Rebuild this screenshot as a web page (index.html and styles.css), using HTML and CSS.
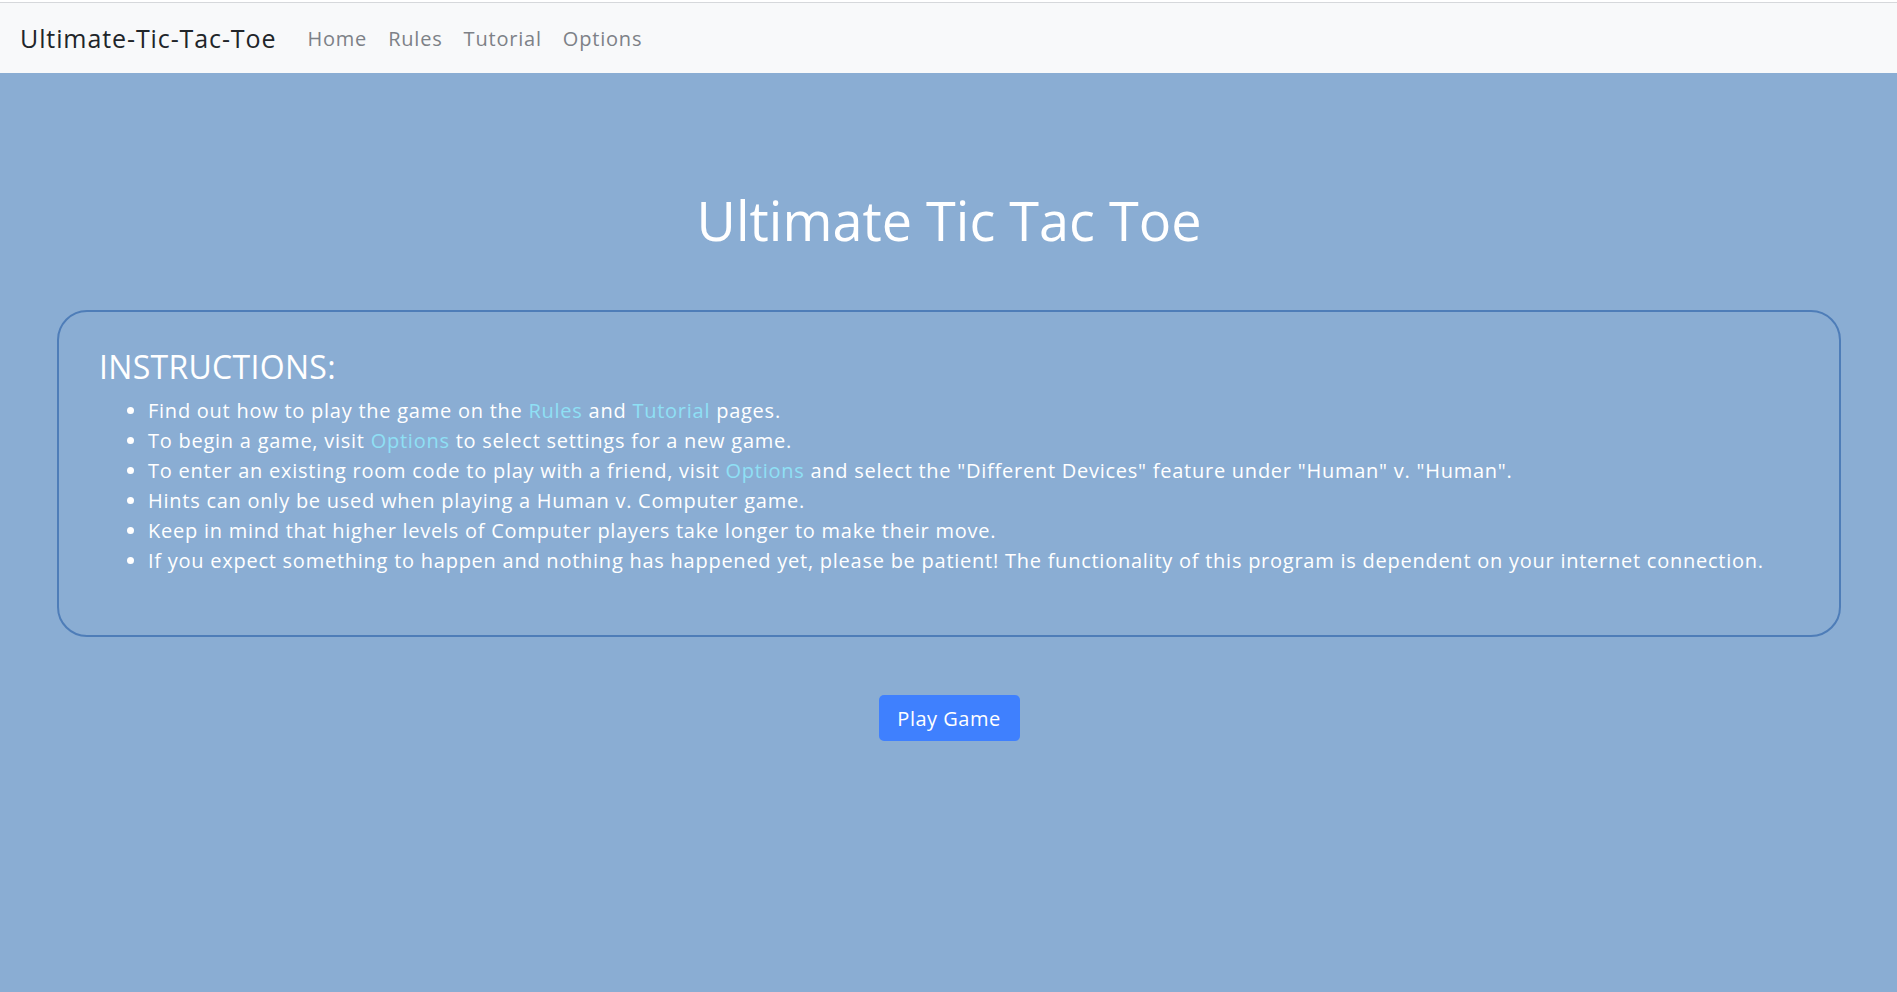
FILE: index.html
```html
<!DOCTYPE html>
<html lang="en">
<head>
<meta charset="utf-8">
<title>Ultimate Tic Tac Toe</title>
<link rel="stylesheet" href="styles.css">
</head>
<body>
<header class="topbar">
  <nav class="navbar">
    <a class="brand" href="#">Ultimate-Tic-Tac-Toe</a>
    <ul class="nav-links">
      <li><a href="#">Home</a></li>
      <li><a href="#">Rules</a></li>
      <li><a href="#">Tutorial</a></li>
      <li><a href="#">Options</a></li>
    </ul>
  </nav>
</header>
<main class="main">
  <h1 class="title">Ultimate Tic Tac Toe</h1>
  <section class="instructions">
    <h3 class="instructions-title">INSTRUCTIONS:</h3>
    <ul class="instructions-list">
      <li>Find out how to play the game on the <a href="#">Rules</a> and <a href="#">Tutorial</a> pages.</li>
      <li>To begin a game, visit <a href="#">Options</a> to select settings for a new game.</li>
      <li>To enter an existing room code to play with a friend, visit <a href="#">Options</a> and select the "Different Devices" feature under "Human" v. "Human".</li>
      <li>Hints can only be used when playing a Human v. Computer game.</li>
      <li>Keep in mind that higher levels of Computer players take longer to make their move.</li>
      <li>If you expect something to happen and nothing has happened yet, please be patient! The functionality of this program is dependent on your internet connection.</li>
    </ul>
  </section>
  <div class="actions">
    <button class="play-btn" type="button">Play Game</button>
  </div>
</main>
</body>
</html>
```
FILE: styles.css
```css
* { box-sizing: border-box; }
html, body { margin: 0; padding: 0; }
body {
  background: #8aadd3;
  font-family: "Open Sans", "Liberation Sans", sans-serif;
  color: #fff;
  min-height: 992px;
}
a { text-decoration: none; }

.topbar {
  background: #fff;
  padding-top: 2px;
}
.navbar {
  background: #f8f9fa;
  border-top: 1px solid #d6d8db;
  height: 71px;
  display: flex;
  align-items: center;
  padding: 0 20px;
}
.brand {
  color: #212529;
  font-size: 25px;
  letter-spacing: 0.9px;
  margin-right: 31px;
}
.nav-links {
  list-style: none;
  display: flex;
  gap: 21px;
  margin: 0;
  padding: 0;
}
.nav-links a {
  color: #7d8187;
  font-size: 20px;
  letter-spacing: 0.8px;
}

.main {
  padding: 0 56px 0 57px;
}
.title {
  margin: 115px 0 57px;
  text-align: center;
  font-weight: 400;
  font-size: 54px;
  line-height: 65px;
}
.instructions {
  border: 2px solid #4e7db8;
  border-radius: 30px;
  padding: 36px 40px 59px;
}
.instructions-title {
  margin: 0 0 10px;
  font-weight: 400;
  font-size: 32px;
  letter-spacing: 0.3px;
  line-height: 38px;
}
.instructions-list {
  margin: 0;
  padding-left: 49px;
  font-size: 20px;
  letter-spacing: 0.75px;
  line-height: 30px;
}
.instructions-list a { color: #8fe0f5; }

.actions {
  display: flex;
  justify-content: center;
  padding-top: 58px;
}
.play-btn {
  background: #3f80fe;
  color: #fff;
  border: none;
  border-radius: 5px;
  font-family: inherit;
  font-size: 20px;
  letter-spacing: 0.5px;
  height: 46px;
  width: 141px;
  padding: 0;
}
```
